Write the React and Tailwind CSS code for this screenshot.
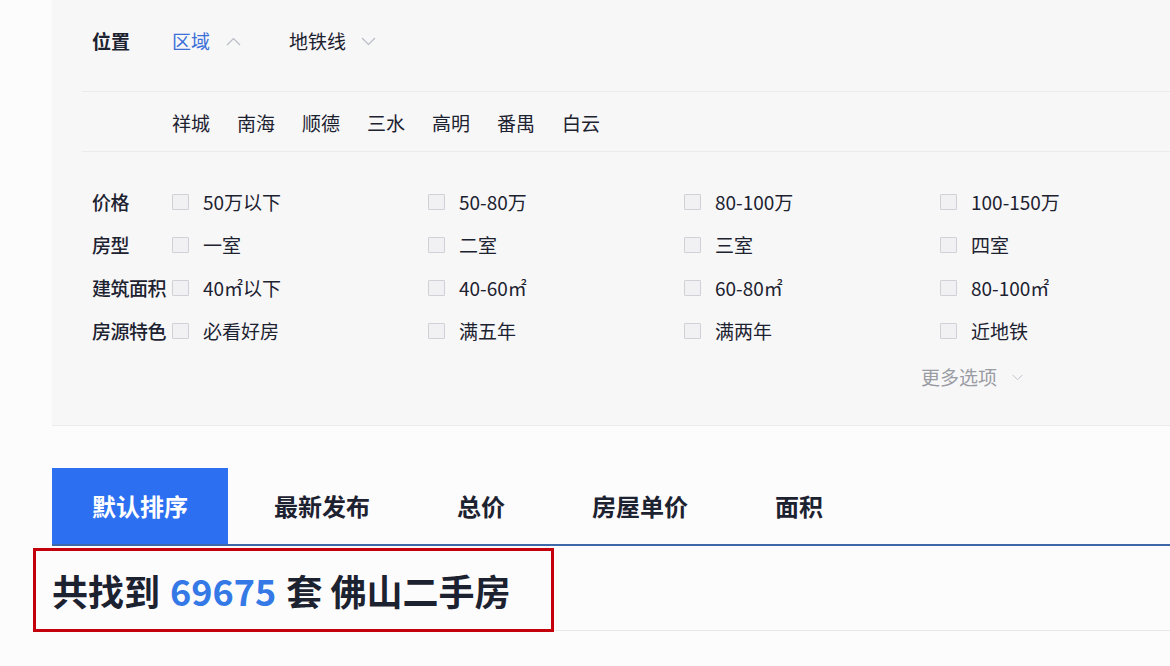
import React from 'react'

const font = { fontFamily: '"Noto Sans CJK SC", "Noto Sans", sans-serif' }

function Chevron({ up, className }) {
  return (
    <svg width="15" height="9" viewBox="0 0 15 9" className={className}>
      <polyline
        points={up ? '1,8 7.5,1.5 14,8' : '1,1 7.5,7.5 14,1'}
        fill="none"
        stroke="#b8bcc4"
        strokeWidth="1.2"
      />
    </svg>
  )
}

const districts = ['祥城', '南海', '顺德', '三水', '高明', '番禺', '白云']

const filters = [
  { label: '价格', options: ['50万以下', '50-80万', '80-100万', '100-150万'] },
  { label: '房型', options: ['一室', '二室', '三室', '四室'] },
  { label: '建筑面积', options: ['40㎡以下', '40-60㎡', '60-80㎡', '80-100㎡'] },
  { label: '房源特色', options: ['必看好房', '满五年', '满两年', '近地铁'] },
]

const tabs = ['最新发布', '总价', '房屋单价', '面积']

export default function App() {
  return (
    <div className="min-h-[666px] w-[1170px] bg-[#fcfcfd] text-[#1d2230] overflow-hidden" style={font}>
      {/* filter panel */}
      <div className="ml-[52px] bg-[#f7f7f8] border-b border-[#ececee] pl-[30px]">
        <div className="h-[92px] pt-[28px] pl-[10px] border-b border-[#ebebed] flex items-start text-[19px] leading-[26px]">
          <span className="font-bold w-[80px]">位置</span>
          <span className="text-[#3a6fd8]">区域</span>
          <Chevron up className="ml-[16px] mt-[9px]" />
          <span className="ml-[48px]">地铁线</span>
          <Chevron className="ml-[15px] mt-[9px]" />
        </div>
        <div className="h-[60px] pt-[18px] pl-[90px] border-b border-[#ebebed] flex gap-[27px] text-[19px] leading-[26px]">
          {districts.map(d => (
            <span key={d}>{d}</span>
          ))}
        </div>
        <div className="pt-[28px] pl-[10px]">
          {filters.map(f => (
            <div key={f.label} className="h-[43px] flex items-center text-[19px] leading-[26px]">
              <span className="w-[80px] shrink-0 font-medium whitespace-nowrap tracking-[-0.5px]">{f.label}</span>
              {f.options.map(o => (
                <div key={o} className="w-[256px] shrink-0 flex items-center">
                  <span className="w-[17px] h-[16px] shrink-0 border border-[#cfd1d6] bg-[#f1f1f3] rounded-[1px]" />
                  <span className="ml-[14px] whitespace-nowrap">{o}</span>
                </div>
              ))}
            </div>
          ))}
          <div className="h-[50px] flex items-center pl-[829px] text-[19px] text-[#9a9ca3]">
            <span className="whitespace-nowrap">更多选项</span>
            <Chevron className="ml-[13px] scale-75" />
          </div>
          <div className="h-[23px]" />
        </div>
      </div>

      {/* sort tabs */}
      <div className="ml-[52px] mt-[42px] h-[78px] border-b-2 border-[#3f68a8] flex items-stretch text-[24px] font-bold">
        <div className="w-[176px] bg-[#2c70f1] text-white flex items-center justify-center">默认排序</div>
        <div className="flex items-center gap-[87px] ml-[46px]">
          {tabs.map(t => (
            <span key={t}>{t}</span>
          ))}
        </div>
      </div>

      {/* result count */}
      <div className="flex items-end">
        <div className="ml-[33px] mt-[2px] w-[521px] h-[84px] border-[3px] border-[#c3000c] flex items-center pl-[16px] text-[36px] font-bold whitespace-nowrap">
          共找到 <span className="text-[#3479e6] mx-[10px]">69675</span> 套 佛山二手房
        </div>
        <div className="flex-1 border-b border-[#e8e8ea] mb-[1px]" />
      </div>
    </div>
  )
}
